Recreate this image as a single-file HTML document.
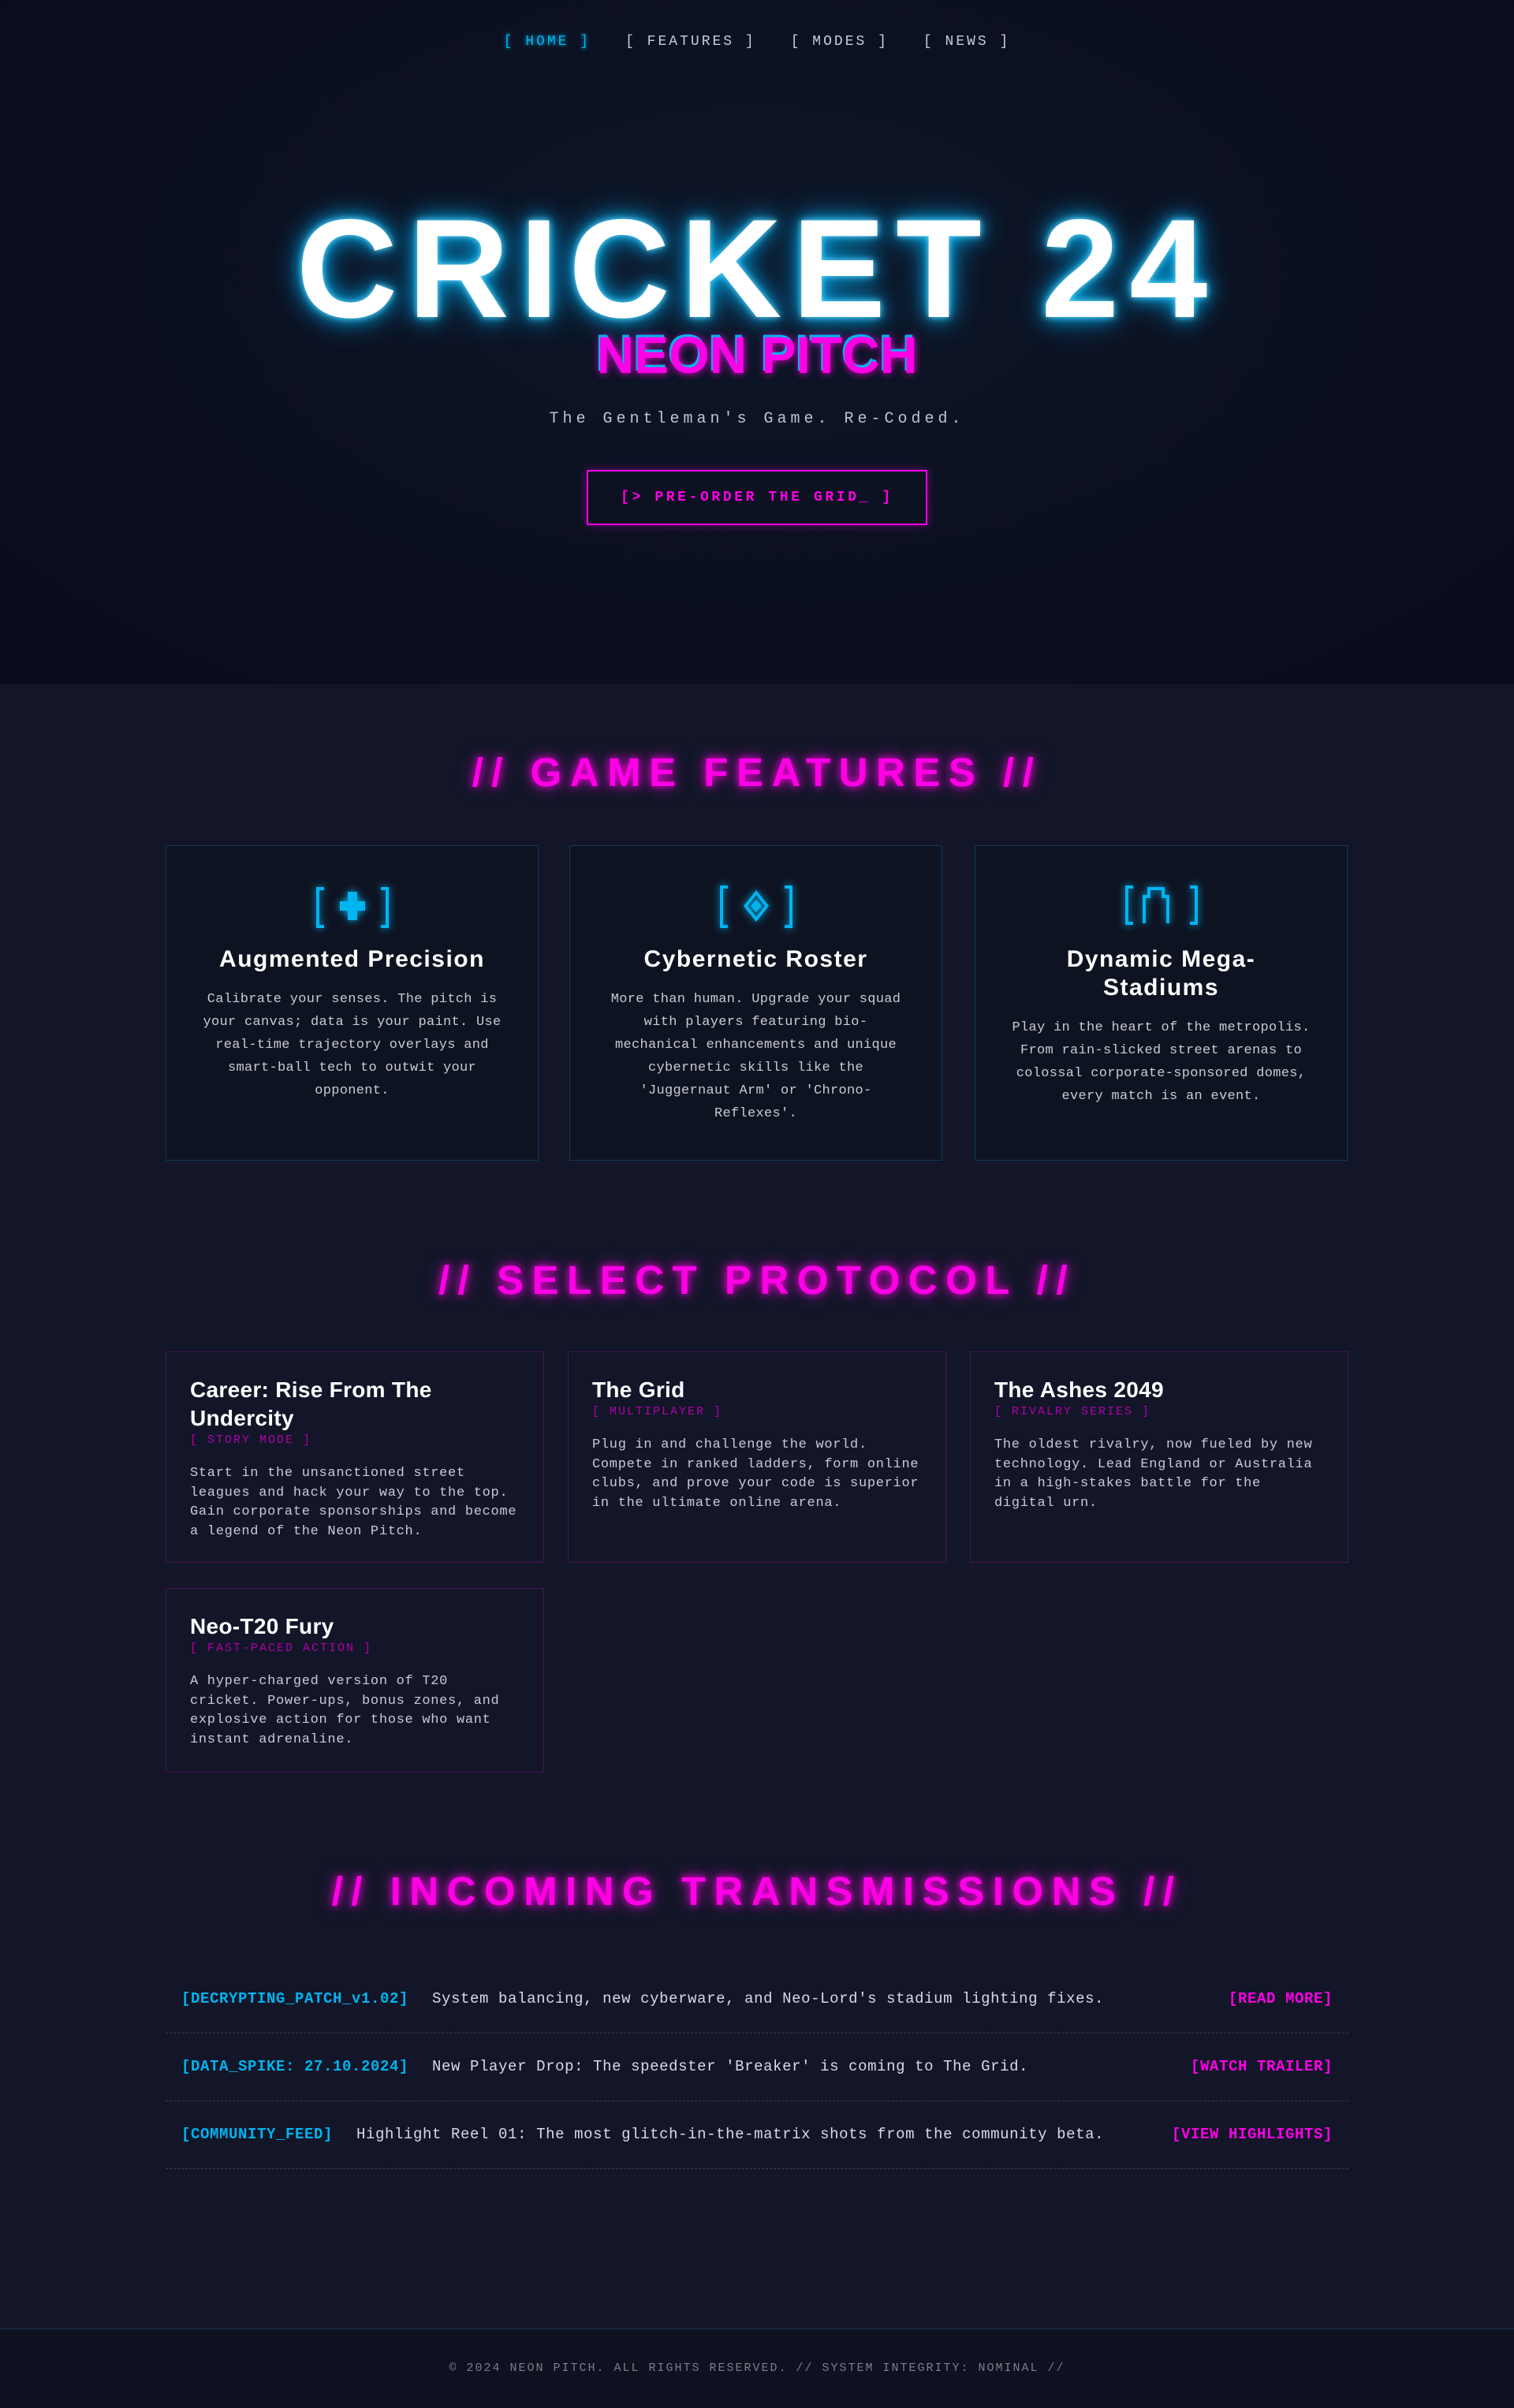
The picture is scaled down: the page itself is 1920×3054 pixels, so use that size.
<!DOCTYPE html>
<html><head><meta charset="utf-8"><style>
*{margin:0;padding:0;box-sizing:border-box}
body{width:1920px;height:3053px;background:#121628;font-family:"Liberation Mono",monospace;color:#d0d3dc;overflow:hidden}
.hero{height:868px;background:radial-gradient(ellipse at 50% 40%,#0d1628 0%,#0b0f1f 60%,#0a0d1b 100%);position:relative}
nav{position:absolute;top:43px;left:0;width:1920px;text-align:center;font-size:18px;letter-spacing:3px;color:#c9ccd4}
nav span{display:inline-block;margin:0 22px}
nav .on{color:#00b4f0;text-shadow:0 0 6px #00b4f0}
h1{position:absolute;top:246px;width:1920px;text-align:center;font-family:"Liberation Sans",sans-serif;font-weight:bold;font-size:178px;letter-spacing:13px;line-height:190px;color:#fff;text-shadow:0 0 8px #6fd8ff,0 0 20px #00b4f0,0 0 40px #0090d0}
.sub{position:absolute;top:412px;width:1920px;text-align:center;font-family:"Liberation Sans",sans-serif;font-weight:bold;font-size:66px;line-height:76px;color:#ff00e6;text-shadow:-2px -3px 0 #00b4f0,0 0 10px #ff00e6}
.tag{position:absolute;top:520px;width:1920px;text-align:center;font-size:20px;letter-spacing:5px;color:#c0c3cc}
.btn{position:absolute;top:596px;left:744px;width:432px;height:70px;border:2px solid #ff00e6;color:#ff00e6;font-size:18px;letter-spacing:3.6px;font-weight:bold;text-align:center;line-height:66px;box-shadow:0 0 10px rgba(255,0,230,.4)}
.st{text-align:center;font-family:"Liberation Sans",sans-serif;font-weight:bold;font-size:51px;letter-spacing:10.5px;color:#ff00e6;text-shadow:0 0 10px #ff00e6,0 0 22px rgba(255,0,230,.6);position:absolute;width:1920px;line-height:60px}
.fc{position:absolute;top:1072px;width:473px;height:400px;background:#0e1322;border:1px solid #0d3d5a;text-align:center;padding:0 44px}
.ic{margin-top:48px;height:60px;display:flex;justify-content:center}
.fc h3{font-family:"Liberation Sans",sans-serif;font-weight:bold;font-size:30px;color:#fff;line-height:36px;margin-top:18px;letter-spacing:1.5px}
.fc p{font-size:17px;letter-spacing:.3px;line-height:29px;margin-top:18px;color:#c8cbd4}
.mc{position:absolute;width:480px;background:#121628;border:1px solid #4a1355;padding:30px 30px 0}
.mc h3{font-family:"Liberation Sans",sans-serif;font-weight:bold;font-size:28px;color:#fff;line-height:36px;letter-spacing:.3px}
.mc .t{font-size:15px;color:#b000a8;letter-spacing:2px;line-height:20px}
.mc p{font-size:17px;letter-spacing:.7px;line-height:24.5px;margin-top:20px;color:#c8cbd4}
.nr{position:absolute;left:210px;width:1500px;height:87px;border-bottom:1px dashed #3a3f52;font-size:19px;display:flex;align-items:center;padding:0 20px}
.nr b{color:#00b4f0;margin-right:30px;letter-spacing:.6px}
.nr span{flex:1;color:#d8dbe2;letter-spacing:.6px}
.nr i{font-style:normal;font-weight:bold;color:#ff00e6;letter-spacing:.6px}
footer{position:absolute;top:2953px;width:1920px;height:100px;background:#0e1120;border-top:1px solid #17304a;text-align:center;font-size:15px;letter-spacing:2px;color:#7a7f8c;line-height:100px}
</style></head><body>
<div class="hero">
<nav><span class="on">[ HOME ]</span><span>[ FEATURES ]</span><span>[ MODES ]</span><span>[ NEWS ]</span></nav>
<h1>CRICKET 24</h1>
<div class="sub">NEON PITCH</div>
<div class="tag">The Gentleman's Game. Re-Coded.</div>
<div class="btn">[&gt; PRE-ORDER THE GRID_ ]</div>
</div>
<div class="st" style="top:950px">// GAME FEATURES //</div>
<div class="fc" style="left:210px"><div class="ic"><svg width="96" height="60" viewBox="0 0 96 60" style="filter:drop-shadow(0 0 5px #00b4f0)" fill="#00b4f0"><path d="M2 4h10v4H6v44h6v4H2zM94 4H84v4h6v44h-6v4h10z"/><path d="M42 10h12v12h10v12H54v12H42V34H32V22h10z"/></svg></div><h3>Augmented Precision</h3><p>Calibrate your senses. The pitch is your canvas; data is your paint. Use real-time trajectory overlays and smart-ball tech to outwit your opponent.</p></div>
<div class="fc" style="left:722px"><div class="ic"><svg width="96" height="60" viewBox="0 0 96 60" style="filter:drop-shadow(0 0 5px #00b4f0)" fill="#00b4f0"><path d="M2 2h10v4H6v46h6v4H2zM94 2H84v4h6v46h-6v4h10z"/><path d="M48 8l16 20-16 20-16-20zM48 14l-11 14 11 14 11-14z" fill-rule="evenodd"/><path d="M48 20l7 8-7 8-7-8z"/></svg></div><h3>Cybernetic Roster</h3><p>More than human. Upgrade your squad with players featuring bio-mechanical enhancements and unique cybernetic skills like the 'Juggernaut Arm' or 'Chrono-Reflexes'.</p></div>
<div class="fc" style="left:1236px"><div class="ic"><svg width="96" height="60" viewBox="0 0 96 60" style="filter:drop-shadow(0 0 5px #00b4f0)" fill="none" stroke="#00b4f0" stroke-width="4"><path d="M12 4H4v46h8M84 4h8v46h-8M26 50V16h6V6h18v10h6v34"/></svg></div><h3>Dynamic Mega-<br>Stadiums</h3><p>Play in the heart of the metropolis. From rain-slicked street arenas to colossal corporate-sponsored domes, every match is an event.</p></div>
<div class="st" style="top:1594px">// SELECT PROTOCOL //</div>
<div class="mc" style="left:210px;top:1714px;height:268px"><h3>Career: Rise From The Undercity</h3><div class="t">[ STORY MODE ]</div><p>Start in the unsanctioned street leagues and hack your way to the top. Gain corporate sponsorships and become a legend of the Neon Pitch.</p></div>
<div class="mc" style="left:720px;top:1714px;height:268px"><h3>The Grid</h3><div class="t">[ MULTIPLAYER ]</div><p>Plug in and challenge the world. Compete in ranked ladders, form online clubs, and prove your code is superior in the ultimate online arena.</p></div>
<div class="mc" style="left:1230px;top:1714px;height:268px"><h3>The Ashes 2049</h3><div class="t">[ RIVALRY SERIES ]</div><p>The oldest rivalry, now fueled by new technology. Lead England or Australia in a high-stakes battle for the digital urn.</p></div>
<div class="mc" style="left:210px;top:2014px;height:234px"><h3>Neo-T20 Fury</h3><div class="t">[ FAST-PACED ACTION ]</div><p>A hyper-charged version of T20 cricket. Power-ups, bonus zones, and explosive action for those who want instant adrenaline.</p></div>
<div class="st" style="top:2369px">// INCOMING TRANSMISSIONS //</div>
<div class="nr" style="top:2492px"><b>[DECRYPTING_PATCH_v1.02]</b><span>System balancing, new cyberware, and Neo-Lord's stadium lighting fixes.</span><i>[READ MORE]</i></div>
<div class="nr" style="top:2578px"><b>[DATA_SPIKE: 27.10.2024]</b><span>New Player Drop: The speedster 'Breaker' is coming to The Grid.</span><i>[WATCH TRAILER]</i></div>
<div class="nr" style="top:2664px"><b>[COMMUNITY_FEED]</b><span>Highlight Reel 01: The most glitch-in-the-matrix shots from the community beta.</span><i>[VIEW HIGHLIGHTS]</i></div>
<footer>© 2024 NEON PITCH. ALL RIGHTS RESERVED. // SYSTEM INTEGRITY: NOMINAL //</footer>
</body></html>
